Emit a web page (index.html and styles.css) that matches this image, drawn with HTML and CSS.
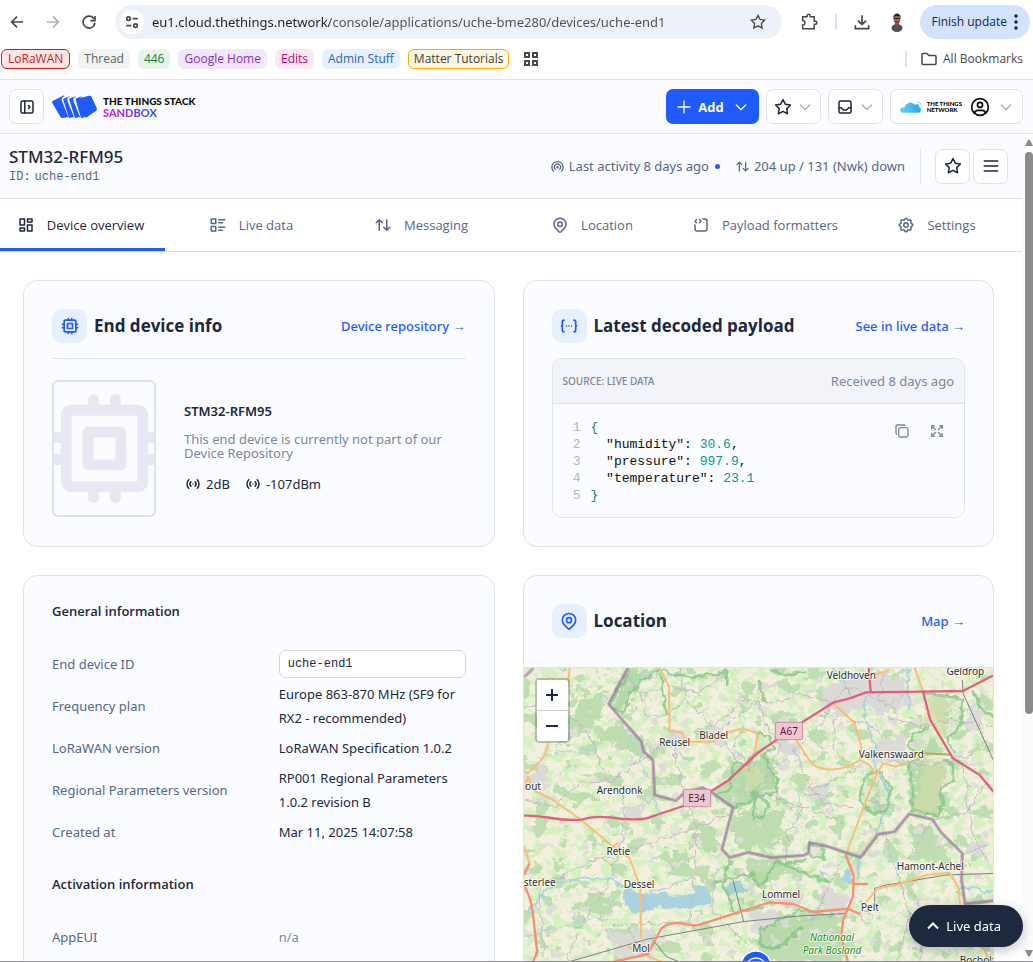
FILE: index.html
```html
<!DOCTYPE html>
<html lang="en">
<head>
<meta charset="utf-8">
<meta name="viewport" content="width=device-width, initial-scale=1">
<title>STM32-RFM95 - Device overview</title>
<link rel="stylesheet" href="styles.css">
</head>
<body>
<svg class="sprite" aria-hidden="true">
  <symbol id="star" viewBox="0 0 24 24"><path d="M12 17.75l-6.172 3.245l1.179-6.873l-5-4.867l6.9-1l3.086-6.253l3.086 6.253l6.9 1l-5 4.867l1.179 6.873z"/></symbol>
  <symbol id="chevron" viewBox="0 0 24 24"><path d="M5 9l7 7l7-7"/></symbol>
  <symbol id="sort" viewBox="0 0 24 24"><path d="M3 9l4-4l4 4m-4-4v14M21 15l-4 4l-4-4m4 4v-14"/></symbol>
  <symbol id="pin" viewBox="0 0 24 24"><circle cx="12" cy="11" r="3"/><path d="M17.657 16.657l-4.243 4.243a2 2 0 0 1-2.827 0l-4.244-4.243a8 8 0 1 1 11.314 0z"/></symbol>
  <symbol id="cpu" viewBox="0 0 24 24"><path d="M5 6a1 1 0 0 1 1-1h12a1 1 0 0 1 1 1v12a1 1 0 0 1-1 1h-12a1 1 0 0 1-1-1zM9 9h6v6h-6zM3 10h2M3 14h2M10 3v2M14 3v2M21 10h-2M21 14h-2M14 21v-2M10 21v-2"/></symbol>
  <symbol id="access" viewBox="0 0 24 24"><path d="M12 12v.01M14.828 9.172a4 4 0 0 1 0 5.656M17.657 6.343a8 8 0 0 1 0 11.314M9.168 14.828a4 4 0 0 1 0-5.656M6.337 17.657a8 8 0 0 1 0-11.314"/></symbol>
</svg>

<div class="toolbar">
  <button class="nav-btn" aria-label="Back"><svg class="chrome-icon" viewBox="0 0 24 24"><path d="M21 12H4M12 4l-8 8l8 8"/></svg></button>
  <button class="nav-btn dim" aria-label="Forward"><svg class="chrome-icon" viewBox="0 0 24 24"><path d="M3 12h17M12 4l8 8l-8 8"/></svg></button>
  <button class="nav-btn" aria-label="Reload"><svg class="chrome-icon" viewBox="0 0 24 24"><path d="M19.5 7A9 9 0 1 0 21 13.500M21 3v7h-7"/></svg></button>
  <div class="omnibox">
    <button class="site-info" aria-label="Site information"><svg class="chrome-icon small" viewBox="0 0 24 24"><circle cx="6" cy="6" r="3"/><path d="M13 6h9M2 18h9"/><circle cx="18" cy="18" r="3"/></svg></button>
    <input class="url" type="text" aria-label="Address" value="eu1.cloud.thethings.network/console/applications/uche-bme280/devices/uche-end1">
    <button class="plain" aria-label="Bookmark this page"><svg class="chrome-icon"><use href="#star"/></svg></button>
  </div>
  <button class="plain ext" aria-label="Extensions"><svg class="chrome-icon" viewBox="0 0 24 24"><path d="M3.500 5h6V3.500a2 2 0 0 1 4 0V5H19v6h1.500a2 2 0 0 1 0 4H19v6H3.500v-5a3 3 0 0 0 0-6z"/></svg></button>
  <span class="tick"></span>
  <button class="plain" aria-label="Downloads"><svg class="chrome-icon" viewBox="0 0 24 24"><path d="M12 2v13M6 10l6 6l6-6M2 17v5h20v-5"/></svg></button>
  <button class="plain avatar" aria-label="Profile"><svg viewBox="0 0 14 20"><ellipse cx="7" cy="16" rx="5.500" ry="4" fill="#4d5058"/><path d="M5 10h4v4l-2 2l-2-2z" fill="#7a4a3a"/><ellipse cx="7" cy="7" rx="3.500" ry="5" fill="#a2644f"/><path d="M3.300 6C3 0 11 0 10.700 6C9.500 3 5 3 3.300 6z" fill="#211b1b"/><path d="M3.800 6.500h6.400M5.500 10h3" stroke="#33211f" stroke-width="1"/></svg></button>
  <button class="update">Finish update <svg viewBox="0 0 4 16"><circle cx="2" cy="2" r="1.700"/><circle cx="2" cy="8" r="1.700"/><circle cx="2" cy="14" r="1.700"/></svg></button>
</div>

<nav class="bookmarks" aria-label="Bookmarks">
  <a class="chip red" href="#">LoRaWAN</a>
  <a class="chip grey" href="#">Thread</a>
  <a class="chip green" href="#">446</a>
  <a class="chip purple" href="#">Google Home</a>
  <a class="chip pink" href="#">Edits</a>
  <a class="chip blue" href="#">Admin Stuff</a>
  <a class="chip yellow" href="#">Matter Tutorials</a>
  <button class="plain apps" aria-label="Tab groups"><svg viewBox="0 0 14 14"><path d="M1 1h4v4H1zM9 1h4v4H9zM1 9h4v4H1zM9 9h4v4H9z"/></svg></button>
  <span class="tick push"></span>
  <a class="all" href="#"><svg viewBox="0 0 16 14"><path d="M1 2.500a1 1 0 0 1 1-1h4l2 2h6a1 1 0 0 1 1 1v7a1 1 0 0 1-1 1H2a1 1 0 0 1-1-1z"/></svg>All Bookmarks</a>
</nav>

<header class="header">
  <button class="box-btn square" aria-label="Expand sidebar"><svg class="icon" viewBox="0 0 24 24"><rect x="4" y="4" width="16" height="16" rx="2"/><path d="M9 4v16M14 10l2 2l-2 2"/></svg></button>
  <a class="brand" href="#" aria-label="The Things Stack Sandbox">
    <svg class="brand-mark" viewBox="0 0 135 69">
      <path d="M3 17L33 2a5 5 0 0 1 5 0C30 8 27 12 30 19L49 66l-16 3a7 7 0 0 1-8-4L1 24a5 5 0 0 1 2-7z"/>
      <path d="M33 12L54 3C46 10 44 13 47 20L66 66L51 69z"/>
      <path d="M51 11L72 3C64 10 62 13 65 20L84 66L69 69z"/>
      <path d="M70 11L91 3C83 10 81 13 84 20L102 66L87 69z"/>
      <path d="M81 17a6 6 0 0 1 3-8L111 2a8 8 0 0 1 8 4L134 39a7 7 0 0 1-3 9L106 66a6 6 0 0 1-8-3z"/>
    </svg>
    <span class="brand-text"><span>THE THINGS STACK</span><span class="sandbox">SANDBOX</span></span>
  </a>
  <div class="actions">
    <button class="add"><svg class="icon" viewBox="0 0 24 24"><path d="M12 3v18M3 12h18"/></svg>Add<svg class="chev"><use href="#chevron"/></svg></button>
    <button class="box-btn" aria-label="Bookmarks"><svg class="icon"><use href="#star"/></svg><svg class="chev"><use href="#chevron"/></svg></button>
    <button class="box-btn" aria-label="Notifications"><svg class="icon" viewBox="0 0 24 24"><rect x="4" y="4" width="16" height="16" rx="2"/><path d="M4 13h3l3 3h4l3-3h3"/></svg><svg class="chev"><use href="#chevron"/></svg></button>
    <button class="box-btn account" aria-label="Account">
      <svg class="cloud" viewBox="0 0 66 36"><defs><linearGradient id="sky" x1="0" x2="1"><stop offset="0" stop-color="#67cdf8"/><stop offset="1" stop-color="#2aa5ee"/></linearGradient></defs><path fill="url(#sky)" d="M3 34C-4 25 5 17 14 19C16 5 34 0 44 11C50 8 56 12 57 18C66 22 64 33 56 35H8z"/><path class="waves" d="M50 9q6 1 8 7M53 3q9 1 11 9"/></svg>
      <span class="ttn"><span>THE THINGS</span><span>NETWORK</span></span>
      <svg class="icon person" viewBox="0 0 24 24"><circle cx="12" cy="12" r="10"/><circle cx="12" cy="9.500" r="3"/><path d="M5.500 19.500a4 4 0 0 1 4-3.500h5a4 4 0 0 1 4 3.500"/></svg>
      <svg class="chev"><use href="#chevron"/></svg>
    </button>
  </div>
</header>

<div class="viewport">
  <main class="page">
    <section class="device-head">
      <div>
        <h1>STM32-RFM95</h1>
        <p class="device-id"><span>ID:</span><span>uche-end1</span></p>
      </div>
      <div class="status">
        <span class="stat"><svg class="icon" viewBox="0 0 24 24"><path d="M18.364 19.364a9 9 0 1 0-12.728 0M15.536 16.536a5 5 0 1 0-7.072 0"/><circle cx="12" cy="13" r="1"/></svg>Last activity 8 days ago<i class="dot"></i></span>
        <span class="stat"><svg class="icon"><use href="#sort"/></svg>204 up / 131 (Nwk) down</span>
        <div class="head-btns">
          <button class="box-btn square" aria-label="Add to bookmarks"><svg class="icon"><use href="#star"/></svg></button>
          <button class="box-btn square" aria-label="Menu"><svg class="icon big" viewBox="0 0 24 24"><path d="M4 6h16M4 12h16M4 18h16"/></svg></button>
        </div>
      </div>
    </section>

    <nav class="tabs" aria-label="Device">
      <a class="active" href="#"><svg class="icon" viewBox="0 0 24 24"><path d="M4 4h6v8H4zM4 16h6v4H4zM14 12h6v8h-6zM14 4h6v4h-6z"/></svg>Device overview</a>
      <a href="#"><svg class="icon" viewBox="0 0 24 24"><path d="M13 5h8M13 9h5M13 15h8M13 19h5M3 4h6v6H3zM3 14h6v6H3z"/></svg>Live data</a>
      <a href="#"><svg class="icon"><use href="#sort"/></svg>Messaging</a>
      <a href="#"><svg class="icon"><use href="#pin"/></svg>Location</a>
      <a href="#"><svg class="icon" viewBox="0 0 24 24"><path d="M14.500 4h2.500a3 3 0 0 1 3 3v10a3 3 0 0 1-3 3h-10a3 3 0 0 1-3-3v-5M6 5l-2 2l2 2M10 9l2-2l-2-2"/></svg>Payload formatters</a>
      <a href="#"><svg class="icon" viewBox="0 0 24 24"><path d="M10.325 4.317c.426-1.756 2.924-1.756 3.350 0a1.724 1.724 0 0 0 2.573 1.066c1.543-.94 3.310.826 2.370 2.370a1.724 1.724 0 0 0 1.065 2.572c1.756.426 1.756 2.924 0 3.350a1.724 1.724 0 0 0-1.066 2.573c.94 1.543-.826 3.310-2.370 2.370a1.724 1.724 0 0 0-2.572 1.065c-.426 1.756-2.924 1.756-3.350 0a1.724 1.724 0 0 0-2.573-1.066c-1.543.94-3.310-.826-2.370-2.370a1.724 1.724 0 0 0-1.065-2.572c-1.756-.426-1.756-2.924 0-3.350a1.724 1.724 0 0 0 1.066-2.573c-.94-1.543.826-3.310 2.370-2.370c1 .608 2.296.07 2.572-1.065z"/><circle cx="12" cy="12" r="3"/></svg>Settings</a>
    </nav>

    <div class="cards">
      <section class="card">
        <div class="card-head ruled">
          <span class="tile"><svg class="icon"><use href="#cpu"/></svg></span>
          <h2>End device info</h2>
          <a class="more" href="#">Device repository →</a>
        </div>
        <div class="device">
          <div class="device-img"><svg><use href="#cpu"/></svg></div>
          <div class="device-text">
            <h3>STM32-RFM95</h3>
            <p class="note">This end device is currently not part of our Device Repository</p>
            <p class="signals"><span><svg class="icon"><use href="#access"/></svg>2dB</span><span><svg class="icon"><use href="#access"/></svg>-107dBm</span></p>
          </div>
        </div>
      </section>

      <section class="card">
        <div class="card-head">
          <span class="tile"><svg class="icon" viewBox="0 0 24 24"><path d="M15 12h.01M12 12h.01M9 12h.01M6 19a2 2 0 0 1-2-2v-4l-1-1l1-1v-4a2 2 0 0 1 2-2M18 19a2 2 0 0 0 2-2v-4l1-1l-1-1v-4a2 2 0 0 0-2-2"/></svg></span>
          <h2>Latest decoded payload</h2>
          <a class="more" href="#">See in live data →</a>
        </div>
        <div class="payload">
          <div class="payload-head"><span class="source">SOURCE: LIVE DATA</span><span class="received">Received 8 days ago</span></div>
          <div class="code">
            <ol>
              <li><code><b>{</b></code></li>
              <li><code>  "humidity": <i>30.6</i>,</code></li>
              <li><code>  "pressure": <i>997.9</i>,</code></li>
              <li><code>  "temperature": <i>23.1</i></code></li>
              <li><code><b>}</b></code></li>
            </ol>
            <div class="code-btns">
              <button class="plain" aria-label="Copy"><svg class="icon" viewBox="0 0 24 24"><rect x="7" y="7" width="14" height="14" rx="2.667"/><path d="M4.012 16.737a2.005 2.005 0 0 1-1.012-1.737v-10c0-1.100.9-2 2-2h10c.75 0 1.158.385 1.500 1"/></svg></button>
              <button class="plain" aria-label="Expand"><svg class="icon" viewBox="0 0 24 24"><path d="M16 4h4v4M14 10l6-6M8 20H4v-4M4 20l6-6M16 20h4v-4M14 14l6 6M8 4H4v4M4 4l6 6"/></svg></button>
            </div>
          </div>
        </div>
      </section>

      <section class="card">
        <h3 class="group-title">General information</h3>
        <div class="rows">
          <label for="device-id">End device ID</label><input id="device-id" class="id-box" type="text" value="uche-end1" readonly>
          <span>Frequency plan</span><span class="val">Europe 863-870 MHz (SF9 for RX2 - recommended)</span>
          <span>LoRaWAN version</span><span class="val">LoRaWAN Specification 1.0.2</span>
          <span>Regional Parameters version</span><span class="val">RP001 Regional Parameters 1.0.2 revision B</span>
          <span>Created at</span><span class="val">Mar 11, 2025 14:07:58</span>
        </div>
        <h3 class="group-title next">Activation information</h3>
        <div class="rows">
          <span>AppEUI</span><span class="val none">n/a</span>
        </div>
      </section>

      <section class="card map-card">
        <div class="card-head">
          <span class="tile"><svg class="icon"><use href="#pin"/></svg></span>
          <h2>Location</h2>
          <a class="more" href="#">Map →</a>
        </div>
        <div class="map">
          <svg class="map-art" viewBox="33 324 1410 882" preserveAspectRatio="xMinYMin slice">
            <defs>
              <filter id="meadow" x="0" y="0" width="1" height="1" color-interpolation-filters="sRGB"><feTurbulence type="fractalNoise" baseFrequency=".034 .040" numOctaves="4" seed="7"/><feColorMatrix values="0 0 0 0 .84  0 0 0 0 .94  0 0 0 0 .76  12 0 0 0 -5.900"/></filter>
              <filter id="woods" x="0" y="0" width="1" height="1" color-interpolation-filters="sRGB"><feTurbulence type="fractalNoise" baseFrequency=".018 .022" numOctaves="5" seed="21"/><feColorMatrix values="0 0 0 0 .75  0 0 0 0 .87  0 0 0 0 .70  0 26 0 0 -15.800"/></filter>
              <filter id="houses" x="0" y="0" width="1" height="1" color-interpolation-filters="sRGB"><feTurbulence type="fractalNoise" baseFrequency=".03" numOctaves="4" seed="4"/><feColorMatrix values="0 0 0 0 .87  0 0 0 0 .87  0 0 0 0 .85  0 0 24 0 -16.200"/></filter>
              <filter id="rough" x="-.1" y="-.1" width="1.200" height="1.200" color-interpolation-filters="sRGB"><feTurbulence type="fractalNoise" baseFrequency=".04" numOctaves="4" seed="3"/><feDisplacementMap in="SourceGraphic" scale="60" xChannelSelector="R" yChannelSelector="G"/></filter>
              <filter id="wobble" x="-.1" y="-.1" width="1.200" height="1.200" color-interpolation-filters="sRGB"><feTurbulence type="fractalNoise" baseFrequency=".04" numOctaves="2" seed="9"/><feDisplacementMap in="SourceGraphic" scale="26" xChannelSelector="R" yChannelSelector="G"/></filter>
            </defs>
            <rect x="33" y="324" width="1410" height="882" fill="#f2f0dd"/>
            <rect x="33" y="324" width="1410" height="882" filter="url(#meadow)"/>
            <g class="wood" filter="url(#rough)">
              <path d="M215 395l75 20l-55 90l-70 45l-40-10zM320 480l75 75l10 40l-80-30l-70-40zM345 330h90l-70 60l-45 60l-25-20zM600 700l60-85l40-5l70-5l20 75l-60 30l-40 35l-50-5zM670 750l140 10l-10 100l-90 10l-60-20zM1180 800l70-10l60 80l-40 40l-60-20zM540 790l80 20l-10 70l-60-20zM230 990l100 20l-60 60l-70-20zM480 870l60 20l-10 60l-60-10zM790 1080l180-20l20 60l10 90H770l-50-70zM700 900l90-10l60 20l-80 60l-60 20zM1190 600l110 10l-15 110l-10 50l-70-10z"/>
            </g>
            <rect x="33" y="324" width="1410" height="882" filter="url(#woods)"/>
            <rect x="33" y="324" width="1410" height="882" filter="url(#houses)"/>
            <g class="heath" filter="url(#rough)"><path d="M1235 405l70 10l-10 120l-60-50zM1230 600l70 10l-20 110l10 40l-80-10zM690 620l60 0l10 70l-60-10zM1040 845l60-20l-20 50l-40 12z"/></g>
            <g class="town" filter="url(#rough)">
              <path d="M950 370l100-40l110 20l40 60l-60 50l-100-20l-60 30l-60-40zM1080 540l90-15l20 60l-60 30l-60-10zM585 495l60 10l-10 50h-60zM470 510l50 10l-10 40l-40-10zM800 540l70 10l-10 50l-50 0zM880 680l70-10l-10 40l-40 15zM1370 440l50 20l-20 60l-40-20zM330 740l60 0l-5 40h-55zM930 990l80 20l-10 60l-80-20zM700 1060l80-10l0 40l-60 30zM1370 830l40 10v40h-40zM290 1110l130 10l-20 70l-90 0zM90 610l-50 40l10 40l60-20zM790 1000l70 5v40l-60-10z"/>
            </g>
            <g class="water" filter="url(#wobble)">
              <path d="M335 985l60 20l50-10l40 20l60-15l-10-25l50 10l10 50l-90 10l-60-5l-60 20l-50-20zM635 975l60-10l5 30l-60 10zM1000 925l20 15l-5 30l-30-5zM910 935l30 10l-10 10zM890 1070l15-5l5 15l-15 5z"/>
              <path class="river" d="M33 1060C80 1040 90 970 130 970C180 945 240 960 300 960L350 990M1055 395C1060 440 1050 480 1065 510C1100 570 1080 600 1095 640C1130 680 1140 720 1110 770C1090 820 1080 850 1045 890L1030 960M1190 330L1180 390L1195 450M1330 1000L1360 980L1440 1000"/>
              <path class="river brook" d="M100 590C150 560 200 580 250 570M840 850L860 700M40 1130L300 1060M330 500L400 640L450 800M300 370L420 340"/>
            </g>
            <g class="minor" filter="url(#wobble)">
              <path d="M165 470L210 500L245 560L275 650L330 680L335 780L320 870L290 960L190 1120L160 1206M33 720L120 740L200 670L290 660L330 640L400 590L470 540M510 600L480 540L510 700L550 800L545 930L530 1080L500 1110M380 400L470 380L560 400L640 340M380 400L340 340M380 400L400 470L470 460L520 420L600 500L690 420L780 430L860 400L960 430M740 360L730 430L660 480L640 500M640 550L680 620L735 580M735 420L760 500L800 550L770 640L800 720L870 740L850 790L820 810L820 880L815 930M840 560L870 640L930 730L1020 740M900 690L990 650L1050 610M940 710L870 700M820 600L760 640L720 720L740 780M1090 660L1110 800L1140 900L1190 1060L1150 1206M960 430L900 520L850 560M990 600L960 560L970 470M1120 470L1220 500L1320 480L1440 500M1130 600L1240 620L1300 600L1380 580M1260 780L1360 760L1440 640M1350 620L1380 830L1420 900M1340 890L1430 850M890 1100L960 950L1000 880M600 940V1060L640 1090L710 1160M600 950L650 895M470 830L560 800L650 760M80 980L150 950L230 900L310 890L380 860L470 830M80 980L90 1190M33 450L90 420L170 440M540 950L470 980L400 1000L380 1090M545 1090L380 1090M830 1040L760 960M1190 990L1240 1080L1220 1206M1260 780L1180 900M500 324L520 420M300 1100L340 1090L380 1170M960 430L1010 380L1060 400L1120 440L1180 400M980 345L1020 420M1110 345L1100 420L1150 450M690 500L660 560L720 640M1000 480L1080 500L1120 540M740 780L800 720M1060 720L1150 740M870 740L990 790"/>
              <circle cx="1062" cy="1072" r="18"/>
            </g>
            <g class="reserve" filter="url(#wobble)">
              <path d="M345 330L290 432L330 460L350 400L395 360L440 330M440 330L520 350L600 345L640 335V375M440 330L450 400L462 460M740 360L755 430L740 375M770 330L820 345L880 335M735 520l30 5l15 35l-25 30l15 40l25 30l-5 35l-40 15l-25-10l-20 30l-50 15M655 690l-50 10M655 690l5-75l45-5l30-35M725 700l40 30l-10 40l-35 5zM1070 640l35-5l30 50l-15 60l-35 20l-45-40l10-50zM1230 400l120 15l-5 80l-40 40l20 50M1250 500l-50 20l-10 40l35 30l-45 30l20 60l-5 70l80 20l15-40l-10-40l40-30l0-50l-30-15M1380 395l30 60l30 20M650 900l-20 70l40 90l80-20M600 970l120-30l20 40l50-70l90-10M790 900L860 935L950 965M890 855l40 0v40l-40-10zM740 1110l120-60l100 20M740 1110l0 50h70l60-60"/>
            </g>
            <g class="rail"><path d="M165 1206L405 1137L690 1085L860 1068L1000 1060M1085 1030V985L1120 975L1300 945L1443 940M1348 360L1350 400L1443 605M660 960L692 1085M420 1140L460 1190L500 1206"/></g>
            <g class="secondary">
              <path d="M440 324L468 380L470 510L510 520L515 545H600L650 515L690 505L735 520L725 580M170 324L165 370M105 550C100 600 60 620 45 640L33 632M33 690L45 650L60 690L120 720L205 780L300 860L315 848M300 860L350 895L382 980L384 1137M960 428L1025 490L1045 560L1040 600C1000 630 930 640 895 610L850 540M1040 600L1070 615L1090 645L1110 610L1150 620L1190 605M1090 645L1060 720L998 885M1205 324L1230 395M1080 345L1130 330M1060 1025L1095 985L1150 975L1240 945L1310 938L1335 980L1345 1060L1350 1100M1380 1130L1415 1170L1430 1206M33 860L50 910M345 1160L420 1195L450 1206"/>
              <path d="M1235 580L1312 584" class="olive"/>
            </g>
            <g class="primary"><path d="M50 910L33 945M33 975C65 1030 60 1090 73 1175L60 1206M300 1206L405 1182L445 1105C490 1070 520 1105 560 1094L770 1027L840 1032L900 1056L1005 1046L1040 1062M998 885L1022 945L1020 1010L990 1080L985 1130L1005 1206M1020 972H1065"/></g>
            <g class="border">
              <path d="M345 324L287 432L385 545L392 575L420 600L425 705L488 722L515 698L570 683L600 700L660 742L627 868L650 893L705 877L775 893L872 886L886 878L889 848L940 858L998 878L1043 892L1095 823L1145 815L1188 762L1258 778L1285 818L1348 880L1346 960L1356 1032L1443 1022M33 352L62 324"/>
              <path class="thin" d="M345 324L287 432L385 545L392 575L420 600L425 705L488 722L515 698L570 683L600 700L660 742L627 868L650 893L705 877L775 893L872 886L886 878L889 848L940 858L998 878L1043 892L1095 823L1145 815L1188 762L1258 778L1285 818L1348 880L1346 960L1356 1032L1443 1022"/>
            </g>
            <g class="motorway"><path d="M33 767C90 764 140 785 205 779C240 768 270 768 330 777C380 780 400 778 430 765L520 735L600 690L645 662L735 578L870 485L960 428L1010 415L1060 397L1225 395L1350 393L1443 345M1067 324L1073 395M1230 395L1252 480L1320 595L1400 645L1443 697"/></g>
            <g class="shield"><rect x="511" y="688" width="82" height="52" rx="5"/><rect x="787" y="487" width="82" height="52" rx="5"/></g>
            <g class="shield-text"><text x="551" y="725">E34</text><text x="828" y="524">A67</text></g>
            <g class="places">
              <text x="1015" y="356">Veldhoven</text><text x="1357" y="346">Geldrop</text><text x="602" y="538">Bladel</text><text x="485" y="557">Reusel</text><text x="1135" y="595">Valkenswaard</text><text x="60" y="690">out</text><text x="320" y="702">Arendonk</text><text x="316" y="885">Retie</text><text x="80" y="978">sterlee</text><text x="378" y="984">Dessel</text><text x="804" y="1014">Lommel</text><text x="1252" y="929">Hamont-Achel</text><text x="1071" y="1052">Pelt</text><text x="384" y="1176">Mol</text><text x="1394" y="1212">Bocholt</text>
              <text class="park" x="957" y="1144">Nationaal</text><text class="park" x="957" y="1181">Park Bosland</text>
            </g>
            <g class="gateway"><circle cx="729" cy="1218" r="45"/><path d="M706 1203q23-18 46 0M714 1216q15-12 30 0"/></g>
          </svg>
          <div class="zoom-ctl"><button aria-label="Zoom in"><svg viewBox="0 0 14 14"><path d="M7 1v12M1 7h12"/></svg></button><button aria-label="Zoom out"><svg viewBox="0 0 14 14"><path d="M1 7h12"/></svg></button></div>
        </div>
      </section>
    </div>
  </main>
  <div class="scrollbar" aria-hidden="true"><svg viewBox="0 0 8 7"><path d="M0 7L3 1q1-1 2 0L8 7z"/></svg><div class="track"><div class="thumb"></div></div><svg viewBox="0 0 8 7"><path d="M0 0L3 6q1 1 2 0L8 0z"/></svg></div>
</div>
<button class="live"><svg viewBox="0 0 12 8"><path d="M1 6.500L6 1.500L11 6.500"/></svg>Live data</button>
</body>
</html>
```
FILE: styles.css
```css
:root {
  --ink: #1d273d;
  --muted: #56658a;
  --soft: #7c869e;
  --line: #dfe2ea;
  --blue: #1f5bff;
  --panel: #fbfcff;
  --mono: "Liberation Mono", monospace;
  --sans: "Noto Sans", "Open Sans", sans-serif;
  --narrow: "Open Sans", "Noto Sans", sans-serif;
}

* { box-sizing: border-box; }

body {
  display: flex;
  flex-direction: column;
  height: 100vh;
  margin: 0;
  overflow: hidden;
  border-bottom: 1px solid #8b8d90;
  background: #fff;
  color: var(--ink);
  font: 13px/20px var(--sans);
}

h1, h2, h3, p, ol { margin: 0; padding: 0; }
a { color: inherit; text-decoration: none; }
button, input { margin: 0; font: inherit; color: inherit; }
button { display: flex; align-items: center; justify-content: center; padding: 0; border: 0; background: none; cursor: pointer; }
svg { display: block; flex: none; fill: none; }
.sprite { position: absolute; width: 0; height: 0; }

.icon {
  width: 18px;
  height: 18px;
  stroke: currentColor;
  stroke-width: 2;
  stroke-linecap: round;
  stroke-linejoin: round;
}
.icon.big { width: 20px; height: 20px; }
.chev { width: 16px; height: 16px; stroke: #a5aec0; stroke-width: 2; stroke-linecap: round; stroke-linejoin: round; }

/* Browser toolbar */
.toolbar { display: flex; align-items: center; height: 44px; padding: 0 3px 0 8px; color: #45484c; }
.chrome-icon { width: 16px; height: 16px; stroke: currentColor; stroke-width: 2.5; }
.chrome-icon.small { width: 14px; height: 14px; }
.nav-btn { width: 18px; height: 18px; margin-right: 18px; }
.nav-btn.dim { color: #aeb1b5; }
.omnibox { display: flex; flex: 1; align-items: center; height: 34px; margin: 0 18px 0 -1px; padding: 0 16px 0 5px; border-radius: 17px; background: #ecf1fa; }
.site-info { width: 24px; height: 24px; border-radius: 12px; background: #fff; }
.url {
  flex: 1;
  min-width: 0;
  margin-left: 8px;
  padding: 0;
  border: 0;
  outline: 0;
  background: linear-gradient(90deg, #1f2023 178px, #4b4e53 178px);
  background-clip: text;
  color: transparent;
}
.omnibox .chrome-icon { stroke-width: 2; }
.site-info .chrome-icon { stroke-width: 3; }
.ext .chrome-icon { width: 18px; height: 18px; stroke-width: 2; }
.tick { width: 2px; height: 16px; margin: 0 17px; background: #d3e3fd; }
.avatar { margin: 0 16px 0 20px; }
.avatar svg { width: 14px; height: 20px; }
.update { gap: 7px; height: 34px; padding: 0 12px 0 11px; border-radius: 17px; background: #d3e3fd; color: #0b2554; font: 12px/20px var(--narrow); }
.update svg { width: 4px; height: 16px; fill: currentColor; }

.bookmarks { display: flex; align-items: center; gap: 8px; height: 36px; padding: 0 10px 6px 1px; border-bottom: 1px solid #dfe1e5; font: 12px/20px var(--narrow); color: #45484c; }
.chip { height: 20px; padding: 0 5px; border: 1px solid transparent; border-radius: 6px; line-height: 18px; font-weight: 500; white-space: nowrap; }
.red { padding: 0 6px; border-color: #c5221f; background: #fbe6e5; color: #c5221f; }
.grey { background: #f1f3f4; color: #5f6368; }
.green { background: #e6f4ea; color: #188038; }
.purple { background: #f2e7fe; color: #8430ce; }
.pink { background: #fde7f3; color: #b80672; }
.blue { background: #e8f0fe; color: #1967d2; }
.yellow { border-color: #f9ab00; background: #fef7e0; color: #3c4043; }
.apps { margin-left: 7px; }
.apps svg { width: 14px; height: 14px; stroke: #45484c; stroke-width: 2; }
.push { margin: 0 6px 0 auto; }
.all { display: flex; align-items: center; gap: 6px; }
.all svg { width: 16px; height: 14px; stroke: #45484c; stroke-width: 1.5; }

/* Console header */
.header { display: flex; flex: none; align-items: center; gap: 8px; height: 54px; padding: 0 10px 0 9px; border-bottom: 1px solid var(--line); background: var(--panel); }
.box-btn { gap: 5px; height: 35px; padding: 0 7px; border: 1px solid var(--line); border-radius: 7px; background: #fff; }
.box-btn.square { width: 35px; padding: 0; }
.brand { display: flex; align-items: center; gap: 6px; }
.brand-mark { width: 45px; height: 23px; fill: var(--blue); }
.brand-text { display: flex; flex-direction: column; color: #0a0a0a; font: 900 10px/12px Lato, sans-serif; }
.sandbox { width: max-content; font-size: 11px; background: linear-gradient(90deg, #e416f0, #1f5bff); background-clip: text; color: transparent; }
.actions { display: flex; gap: 7px; margin-left: auto; }
.add { gap: 6px; height: 35px; padding: 0 10px; border-radius: 7px; background: var(--blue); color: #fff; font-family: var(--narrow); font-weight: 700; }
.add .icon { width: 16px; height: 16px; }
.add .chev { margin-left: 3px; stroke: #fff; }
.box-btn.account { padding: 0 8px 0 9px; }
.cloud { width: 22px; height: 12px; }
.waves { stroke: #35aef1; stroke-width: 2; }
.ttn { display: flex; flex-direction: column; color: #000; font: 900 6px/6px Lato, sans-serif; text-align: left; }
.person { width: 20px; height: 20px; margin: 0 3px; color: #0a0a0a; }

/* Scrolling page */
.viewport { display: flex; flex: 1; min-height: 0; }
.page { flex: 1; min-width: 0; overflow: hidden; }
.scrollbar { display: flex; flex-direction: column; width: 11px; padding: 5px 0 4px 3px; background: #fcfcfc; }
.scrollbar svg { width: 8px; height: 7px; fill: #8b8b8b; }
.track { flex: 1; margin: 6px 0; }
.thumb { height: 71%; border-radius: 4px; background: #8b8b8b; }

.device-head { display: flex; align-items: center; justify-content: space-between; height: 65px; padding: 0 14px 0 9px; border-bottom: 1px solid var(--line); background: var(--panel); }
h1 { font-size: 17px; line-height: 22px; font-weight: 500; }
.device-id { display: flex; gap: 4px; color: var(--muted); font: 12px/18px var(--mono); }
.status { display: flex; align-items: center; gap: 15px; color: var(--muted); }
.stat { display: flex; align-items: center; gap: 4px; white-space: nowrap; }
.stat .icon { width: 15px; height: 15px; }
.dot { width: 5px; height: 5px; margin-left: 2px; border-radius: 50%; background: var(--blue); }
.head-btns { display: flex; gap: 3px; color: var(--ink); border-left: 1px solid var(--line); padding-left: 14px; }

.tabs { display: grid; grid-template-columns: 165fr 172fr 168fr 174fr 172fr 171fr; height: 53px; border-bottom: 1px solid var(--line); color: var(--muted); font-family: var(--narrow); }
.tabs a { display: flex; align-items: center; justify-content: center; gap: 12px; border-bottom: 3px solid transparent; white-space: nowrap; padding-top: 2px; }
.tabs .active { border-color: var(--blue); color: var(--ink); padding-right: 4px; }

.cards { display: grid; grid-template-columns: 1fr 1fr; gap: 28px; padding: 28px 28px 28px 23px; }
.card { min-width: 0; padding: 28px; border: 1px solid var(--line); border-radius: 14px; background: var(--panel); }
.card-head { display: flex; align-items: center; gap: 7px; padding-bottom: 15px; }
.ruled { border-bottom: 1px solid var(--line); }
.tile { display: flex; align-items: center; justify-content: center; width: 35px; height: 34px; border-radius: 10px; background: #e6f0ff; color: var(--blue); }
.tile .icon { width: 20px; height: 20px; }
h2 { font: 700 17px/24px var(--narrow); white-space: nowrap; }
h3 { font-size: 13px; line-height: 14px; font-weight: 600; }
.more { margin-left: auto; color: var(--blue); font-weight: 500; white-space: nowrap; }

.device { display: flex; align-items: center; gap: 28px; padding-top: 21px; }
.device-img { display: flex; flex: none; align-items: center; justify-content: center; width: 104px; height: 137px; overflow: hidden; border: 2px solid var(--line); border-radius: 6px; }
.device-img svg { width: 131px; height: 131px; stroke: #e8e8f5; stroke-width: 2; stroke-linecap: round; stroke-linejoin: round; }
.note { margin: 14px 0; color: var(--soft); line-height: 14px; }
.signals { display: flex; gap: 14px; }
.signals span { display: flex; align-items: center; gap: 4px; }

.payload { overflow: hidden; border: 1px solid var(--line); border-radius: 10px; }
.payload-head { display: flex; align-items: center; justify-content: space-between; height: 45px; padding: 0 10px; border-bottom: 1px solid var(--line); background: #f3f4f9; color: var(--soft); }
.source { font-size: 10px; font-weight: 500; }
.code { display: flex; justify-content: space-between; padding: 15px 19px 13px 10px; }
.code ol { list-style: none; counter-reset: line; font: 13px/17px var(--mono); color: #101010; }
.code li { display: flex; gap: 10px; counter-increment: line; }
.code li::before { content: counter(line); width: 18px; text-align: right; color: #b0b6c6; }
.code code { font: inherit; white-space: pre; }
.code i { color: #099; font-style: normal; }
.code b { color: #16806e; font-weight: 400; }
.code-btns { display: flex; align-items: flex-start; gap: 19px; padding-top: 4px; color: var(--soft); }
.code-btns .icon { width: 16px; height: 16px; }

.group-title { margin-bottom: 25px; font-family: var(--narrow); }
.next { margin-top: 24px; }
.rows { display: grid; grid-template-columns: 227fr 187fr; grid-auto-rows: 42px; align-items: center; color: var(--muted); }
.val { color: var(--ink); line-height: 24px; }
.none { color: var(--soft); }
.id-box { width: 100%; min-width: 0; height: 28px; padding: 0 8px; border: 1px solid #d0d5df; border-radius: 7px; background: #fff; color: var(--ink); font: 12px/18px var(--mono); }

/* Map */
.map-card { display: flex; flex-direction: column; padding: 28px 0 0; overflow: hidden; }
.map-card .card-head { padding: 0 28px 29px; border-bottom: 1px solid var(--line); }
.map { position: relative; flex: 1; min-height: 294px; }
.map-art { position: absolute; width: 100%; height: 294px; }
.zoom-ctl { position: absolute; top: 10px; left: 11px; overflow: hidden; border: 2px solid rgba(0, 0, 0, .2); border-radius: 4px; background-clip: padding-box; }
.zoom-ctl button { width: 31px; height: 30px; background: #fff; }
.zoom-ctl button + button { height: 31px; border-top: 1px solid #ccc; }
.zoom-ctl svg { width: 14px; height: 14px; stroke: var(--ink); stroke-width: 2; }
.wood { fill: #bddcaf; }
.heath { fill: #dadfae; fill-opacity: .8; }
.town { fill: #dcdad9; }
.water { fill: #aad3df; }
.river { fill: none; stroke: #aad3df; stroke-width: 6; }
.brook { stroke-width: 3; }
.minor { stroke: #bdbcbf; stroke-width: 3; stroke-linejoin: round; }
.reserve { fill: #8cc98c; fill-opacity: .15; stroke: #83c383; stroke-opacity: .75; stroke-width: 8; stroke-linejoin: round; }
.rail { stroke: #808080; stroke-width: 3; }
.secondary { stroke: #f9be78; stroke-width: 6; stroke-linejoin: round; }
.olive { stroke: #b8ac62; }
.primary { stroke: #f98f72; stroke-width: 7; stroke-linejoin: round; }
.motorway { stroke: #e2607e; stroke-width: 7; stroke-linejoin: round; }
.border { stroke: #a98aa9; stroke-opacity: .7; stroke-width: 10; stroke-linejoin: round; }
.thin { stroke: #7f6a86; stroke-width: 2; }
.shield { fill: #ecc9d2; stroke: #cf8b9e; stroke-width: 3; }
.shield-text, .places { font: 30px "Noto Sans", sans-serif; text-anchor: middle; }
.shield-text { fill: #6d1238; }
.places { fill: #2d2d2d; stroke: #fff; stroke-opacity: .75; stroke-width: 6; stroke-linejoin: round; paint-order: stroke; }
.park { fill: #258b25; font-style: italic; }
.gateway { fill: var(--blue); stroke: #fff; stroke-width: 4; }

.live {
  position: fixed;
  right: 10px;
  bottom: 15px;
  gap: 7px;
  height: 42px;
  padding: 0 22px 0 18px;
  border-radius: 21px;
  background: #1d293f;
  box-shadow: 0 3px 12px rgba(29, 41, 63, .3);
  color: #fff;
}
.live svg { width: 12px; height: 8px; stroke: #fff; stroke-width: 2; }
```
